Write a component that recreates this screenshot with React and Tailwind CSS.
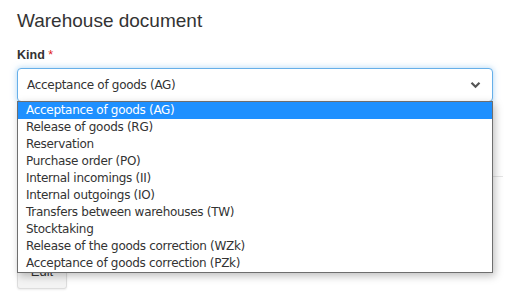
const KINDS = [
  "Acceptance of goods (AG)",
  "Release of goods (RG)",
  "Reservation",
  "Purchase order (PO)",
  "Internal incomings (II)",
  "Internal outgoings (IO)",
  "Transfers between warehouses (TW)",
  "Stocktaking",
  "Release of the goods correction (WZk)",
  "Acceptance of goods correction (PZk)",
];

export default function App() {
  const selected = 0;

  return (
    <div className="relative w-[512px] h-[308px] overflow-hidden bg-white text-[#333] font-['Liberation_Sans',Arial,sans-serif]">
      <div className="pl-[17px] pr-[19px]">
        {/* Header */}
        <h3 className="pt-[9px] text-[19px] leading-[24px] text-[#333]">Warehouse document</h3>

        {/* Kind */}
        <div className="mt-[15px]">
          <label className="block text-[12.5px] font-bold leading-[15px] mb-[5px]">
            Kind <span className="text-[#e02020] font-normal">*</span>
          </label>
          <div className="flex items-center h-[34px] px-[9px] rounded-[4px] border border-[#66afe9] shadow-[0_0_6px_rgba(102,175,233,0.55)] bg-white">
            <span className="flex-1 text-[12px] text-[#333] font-['DejaVu_Sans',Verdana,sans-serif] tracking-[-0.3px]">
              {KINDS[selected]}
            </span>
            <svg width="11" height="8" viewBox="0 0 11 8" className="mr-[2px]">
              <path d="M1.5 1.8 L5.5 5.8 L9.5 1.8" fill="none" stroke="#555" strokeWidth="2.2" />
            </svg>
          </div>
        </div>

        {/* Below the select, mostly covered by the list */}
        <div className="mt-[74px] mr-[-10px] border-t border-[#e5e5e5]" />
        <div className="mt-[78px]">
          <button className="w-[50px] h-[34px] rounded-[3px] border border-[#ddd] bg-[#f3f3f3] text-[13px] text-[#333] shadow-[0_1px_2px_rgba(0,0,0,0.08)]">
            Edit
          </button>
        </div>
      </div>

      {/* Open list */}
      <ul className="absolute left-[17px] top-[101px] w-[476px] border border-[#6e6e6e] bg-white shadow-[2px_3px_8px_rgba(0,0,0,0.25)] font-['DejaVu_Sans',Verdana,sans-serif] text-[12px] tracking-[-0.3px]">
        {KINDS.map((k, i) => (
          <li
            key={k}
            className={`h-[17px] leading-[17px] pl-[8px] ${
              i === selected ? "bg-[#1e90ff] text-white" : "text-[#333]"
            }`}
          >
            {k}
          </li>
        ))}
      </ul>
    </div>
  );
}
